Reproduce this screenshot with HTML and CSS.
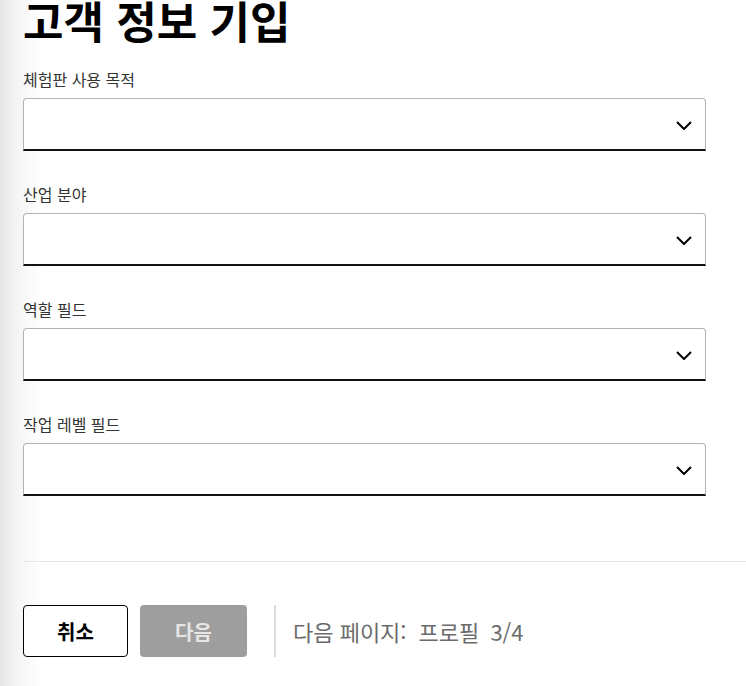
FILE: index.html
```html
<!DOCTYPE html>
<html lang="ko">

<head>
    <meta charset="UTF-8">
    <meta name="viewport" content="width=device-width, initial-scale=1.0">
    <title>고객 정보 기입</title>
    <link rel="stylesheet" href="styles.css">
</head>

<body>
    <div class="page">
        <h1 class="title">고객 정보 기입</h1>

        <div class="field">
            <label class="field-label">체험판 사용 목적</label>
            <div class="select">
                <svg class="chevron" width="16" height="9" viewBox="0 0 16 9"><path d="M1 1l7 7 7-7" fill="none" stroke="#000" stroke-width="2"/></svg>
            </div>
        </div>

        <div class="field">
            <label class="field-label">산업 분야</label>
            <div class="select">
                <svg class="chevron" width="16" height="9" viewBox="0 0 16 9"><path d="M1 1l7 7 7-7" fill="none" stroke="#000" stroke-width="2"/></svg>
            </div>
        </div>

        <div class="field">
            <label class="field-label">역할 필드</label>
            <div class="select">
                <svg class="chevron" width="16" height="9" viewBox="0 0 16 9"><path d="M1 1l7 7 7-7" fill="none" stroke="#000" stroke-width="2"/></svg>
            </div>
        </div>

        <div class="field">
            <label class="field-label">작업 레벨 필드</label>
            <div class="select">
                <svg class="chevron" width="16" height="9" viewBox="0 0 16 9"><path d="M1 1l7 7 7-7" fill="none" stroke="#000" stroke-width="2"/></svg>
            </div>
        </div>

        <hr class="divider">

        <div class="actions">
            <button class="button button-cancel">취소</button>
            <button class="button button-next" disabled>다음</button>
            <span class="separator"></span>
            <span class="next-hint">다음 페이지:<span class="next-step">프로필 3/4</span></span>
        </div>
    </div>
</body>

</html>
```

FILE: styles.css
```css
body {
    margin: 0;
    font-family: "Noto Sans CJK KR", "Noto Sans", sans-serif;
    background: linear-gradient(to right, #e6e6e6 0, #f5f5f5 18px, #fff 42px);
    min-height: 100vh;
}

.page {
    padding-left: 23px;
}

.title {
    margin: 0 0 29px;
    font-size: 44px;
    line-height: 40px;
    font-weight: 700;
    color: #000;
}

.field {
    width: 683px;
    margin-bottom: 33px;
}

.field-label {
    display: block;
    font-size: 16px;
    line-height: 20px;
    color: #333;
    margin-bottom: 9px;
}

.select {
    height: 50px;
    display: flex;
    align-items: center;
    justify-content: flex-end;
    padding-right: 13px;
    background-color: #fff;
    border: 1px solid #b3b3b3;
    border-bottom: 2px solid #111;
    border-radius: 4px 4px 0 0;
}

.chevron {
    display: block;
    margin-top: 2px;
}

/* field margin collapses into this one */
.divider {
    border: none;
    border-top: 1px solid #e6e6e6;
    margin: 65px 0 43px;
}

.actions {
    display: flex;
    align-items: center;
}

.button {
    height: 52px;
    border-radius: 4px;
    font-family: inherit;
    font-size: 20px;
    font-weight: 700;
    padding: 0;
}

.button-cancel {
    width: 105px;
    background-color: #fff;
    border: 1px solid #000;
    color: #000;
    margin-right: 12px;
}

.button-next {
    width: 107px;
    background-color: #9e9e9e;
    border: none;
    color: #e6e6e6;
}

.separator {
    width: 2px;
    height: 52px;
    background-color: #dcdcdc;
    margin: 0 17px 0 27px;
}

.next-hint {
    font-size: 22px;
    color: #6b6b6b;
}

.next-step {
    margin-left: 12px;
    word-spacing: 5px;
}
```
